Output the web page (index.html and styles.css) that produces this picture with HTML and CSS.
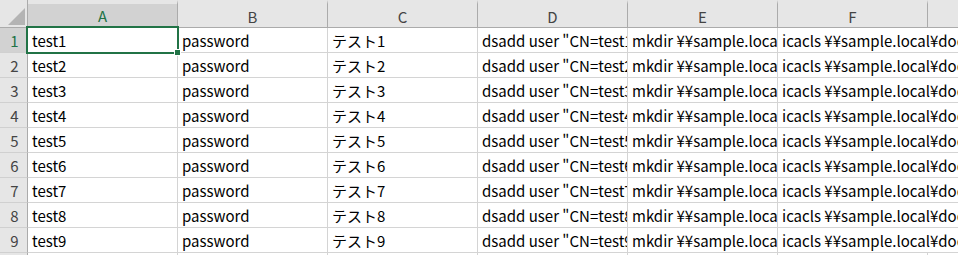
FILE: index.html
```html
<!DOCTYPE html>
<html lang="ja">
<head>
<meta charset="utf-8">
<link rel="stylesheet" href="styles.css">
</head>
<body>
<div class="sheet">
  <div class="corner"><span class="tri"></span></div>
  <div class="ch sel">A</div>
  <div class="ch">B</div>
  <div class="ch">C</div>
  <div class="ch">D</div>
  <div class="ch">E</div>
  <div class="ch">F</div>
  <div class="ch last"></div>

  <div class="rh sel">1</div><div class="c">test1</div><div class="c">password</div><div class="c">テスト1</div><div class="c">dsadd user "CN=test1,OU=Users,DC=sample,DC=local"</div><div class="c">mkdir ¥¥sample.local¥docs¥test1</div><div class="c wide">icacls ¥¥sample.local¥docs¥test1</div>
  <div class="rh">2</div><div class="c">test2</div><div class="c">password</div><div class="c">テスト2</div><div class="c">dsadd user "CN=test2,OU=Users,DC=sample,DC=local"</div><div class="c">mkdir ¥¥sample.local¥docs¥test2</div><div class="c wide">icacls ¥¥sample.local¥docs¥test2</div>
  <div class="rh">3</div><div class="c">test3</div><div class="c">password</div><div class="c">テスト3</div><div class="c">dsadd user "CN=test3,OU=Users,DC=sample,DC=local"</div><div class="c">mkdir ¥¥sample.local¥docs¥test3</div><div class="c wide">icacls ¥¥sample.local¥docs¥test3</div>
  <div class="rh">4</div><div class="c">test4</div><div class="c">password</div><div class="c">テスト4</div><div class="c">dsadd user "CN=test4,OU=Users,DC=sample,DC=local"</div><div class="c">mkdir ¥¥sample.local¥docs¥test4</div><div class="c wide">icacls ¥¥sample.local¥docs¥test4</div>
  <div class="rh">5</div><div class="c">test5</div><div class="c">password</div><div class="c">テスト5</div><div class="c">dsadd user "CN=test5,OU=Users,DC=sample,DC=local"</div><div class="c">mkdir ¥¥sample.local¥docs¥test5</div><div class="c wide">icacls ¥¥sample.local¥docs¥test5</div>
  <div class="rh">6</div><div class="c">test6</div><div class="c">password</div><div class="c">テスト6</div><div class="c">dsadd user "CN=test6,OU=Users,DC=sample,DC=local"</div><div class="c">mkdir ¥¥sample.local¥docs¥test6</div><div class="c wide">icacls ¥¥sample.local¥docs¥test6</div>
  <div class="rh">7</div><div class="c">test7</div><div class="c">password</div><div class="c">テスト7</div><div class="c">dsadd user "CN=test7,OU=Users,DC=sample,DC=local"</div><div class="c">mkdir ¥¥sample.local¥docs¥test7</div><div class="c wide">icacls ¥¥sample.local¥docs¥test7</div>
  <div class="rh">8</div><div class="c">test8</div><div class="c">password</div><div class="c">テスト8</div><div class="c">dsadd user "CN=test8,OU=Users,DC=sample,DC=local"</div><div class="c">mkdir ¥¥sample.local¥docs¥test8</div><div class="c wide">icacls ¥¥sample.local¥docs¥test8</div>
  <div class="rh">9</div><div class="c">test9</div><div class="c">password</div><div class="c">テスト9</div><div class="c">dsadd user "CN=test9,OU=Users,DC=sample,DC=local"</div><div class="c">mkdir ¥¥sample.local¥docs¥test9</div><div class="c wide">icacls ¥¥sample.local¥docs¥test9</div>
  <div class="rh"></div><div class="c"></div><div class="c"></div><div class="c"></div><div class="c"></div><div class="c"></div><div class="c"></div><div class="c"></div>

  <div class="selection"><span class="handle"></span></div>
</div>
</body>
</html>
```
FILE: styles.css
```css
html, body {
  margin: 0;
  padding: 0;
  background: #ffffff;
  overflow: hidden;
}
.sheet {
  position: relative;
  display: grid;
  grid-template-columns: 28px repeat(6, 150px) 40px;
  grid-template-rows: 28px repeat(10, 25px);
  font-family: "Noto Sans CJK JP", "Noto Sans", sans-serif;
  font-size: 15px;
  color: #000;
  width: 958px;
  height: 255px;
  overflow: hidden;
}
.corner {
  position: relative;
  background: #e6e6e6;
  border-right: 1px solid #ababab;
  border-bottom: 1px solid #ababab;
}
.tri {
  position: absolute;
  right: 2px;
  bottom: 2px;
  width: 0;
  height: 0;
  border-left: 17px solid transparent;
  border-bottom: 17px solid #b4b4b4;
}
.ch {
  background: #e6e6e6;
  border-top: 4px solid #e6e6e6;
  border-right: 1px solid #ababab;
  border-bottom: 1px solid #ababab;
  background-clip: padding-box;
  display: flex;
  align-items: center;
  justify-content: center;
  color: #444;
  font-size: 15px;
  box-sizing: border-box;
  padding-top: 1px;
}
.ch.last {
  border-right: none;
}
.ch.sel {
  background: #d2d2d2;
  border-bottom: 2px solid #217346;
  color: #217346;
}
.rh {
  background: #e6e6e6;
  border-right: 1px solid #ababab;
  border-bottom: 1px solid #d0d0d0;
  display: flex;
  align-items: center;
  justify-content: center;
  color: #444;
  box-sizing: border-box;
  padding-left: 2px;
}
.rh.sel {
  background: #d2d2d2;
  color: #217346;
}
.c {
  border-right: 1px solid #d4d4d4;
  border-bottom: 1px solid #d4d4d4;
  box-sizing: border-box;
  white-space: nowrap;
  overflow: hidden;
  padding: 0 0 0 4px;
  display: flex;
  align-items: center;
}
.c.wide {
  grid-column: span 2;
  border-right: none;
}
.selection {
  position: absolute;
  left: 26px;
  top: 26px;
  width: 153px;
  height: 28px;
  border: 2px solid #217346;
  box-sizing: border-box;
}
.handle {
  position: absolute;
  right: -4px;
  bottom: -4px;
  width: 5px;
  height: 5px;
  background: #217346;
  border: 1px solid #ffffff;
}
```
